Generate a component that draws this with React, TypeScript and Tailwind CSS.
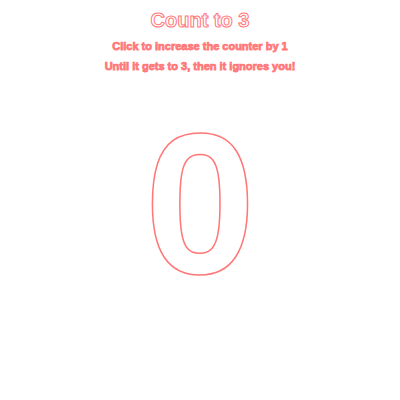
import React, { useState } from "react";

export default function App() {
  const [count, setCount] = useState(0);
  return (
    <div
      className="flex flex-col items-center w-[400px] h-[400px] bg-white pt-[6px] select-none"
      style={{ fontFamily: '"Liberation Sans", Arial, sans-serif' }}
    >
      <h1 className="text-[20px] leading-[28px] font-bold text-white [-webkit-text-stroke:1px_#ff7777]">
        Count to 3
      </h1>
      <p className="mt-[2px] text-[11px] leading-[20px] font-bold text-[#ff7777] [-webkit-text-stroke:0.75px_#ff7777]">
        Click to increase the counter by 1
      </p>
      <p className="text-[11px] leading-[20px] font-bold text-[#ff7777] [-webkit-text-stroke:0.75px_#ff7777]">
        Until it gets to 3, then it ignores you!
      </p>
      <button
        onClick={() => setCount((c) => (c < 3 ? c + 1 : c))}
        className="mt-[28px] text-[200px] leading-none font-bold text-white [-webkit-text-stroke:1.5px_#ff7777] bg-transparent"
      >
        {count}
      </button>
    </div>
  );
}
